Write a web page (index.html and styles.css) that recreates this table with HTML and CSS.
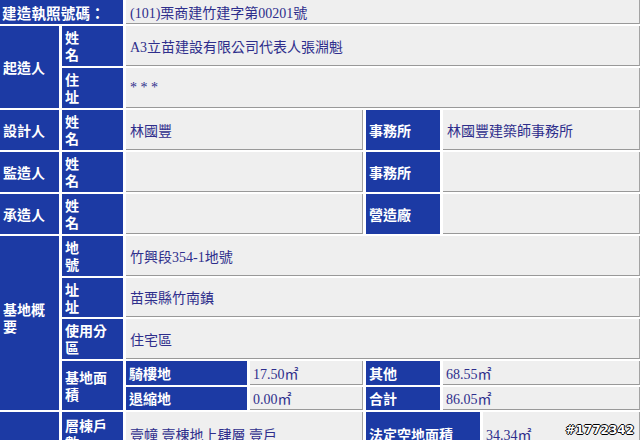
FILE: index.html
```html
<!DOCTYPE html>
<html lang="zh-Hant">
<head>
<meta charset="utf-8">
<title>建造執照</title>
<link rel="stylesheet" href="styles.css">
</head>
<body>
<div class="sheet">
  <div class="lbl hd s2">建造執照號碼：</div>
  <div class="val s5">(101)栗商建竹建字第00201號</div>

  <div class="lbl main rs2">起造人</div>
  <div class="lbl sub">姓<br>名</div>
  <div class="val s5">A3立苗建設有限公司代表人張淵魁</div>
  <div class="lbl sub">住<br>址</div>
  <div class="val s5">* * *</div>

  <div class="lbl main">設計人</div>
  <div class="lbl sub">姓<br>名</div>
  <div class="val s2">林國豐</div>
  <div class="lbl">事務所</div>
  <div class="val s2">林國豐建築師事務所</div>

  <div class="lbl main">監造人</div>
  <div class="lbl sub">姓<br>名</div>
  <div class="val s2"></div>
  <div class="lbl">事務所</div>
  <div class="val s2"></div>

  <div class="lbl main">承造人</div>
  <div class="lbl sub">姓<br>名</div>
  <div class="val s2"></div>
  <div class="lbl">營造廠</div>
  <div class="val s2"></div>

  <div class="lbl main rs5 up">基地概<br>要</div>
  <div class="lbl sub">地<br>號</div>
  <div class="val s5">竹興段354-1地號</div>
  <div class="lbl sub">址<br>址</div>
  <div class="val s5">苗栗縣竹南鎮</div>
  <div class="lbl sub">使用分<br>區</div>
  <div class="val s5">住宅區</div>

  <div class="lbl sub rs2">基地面<br>積</div>
  <div class="lbl">騎樓地</div>
  <div class="val num">17.50㎡</div>
  <div class="lbl">其他</div>
  <div class="val num s2">68.55㎡</div>
  <div class="lbl">退縮地</div>
  <div class="val num">0.00㎡</div>
  <div class="lbl">合計</div>
  <div class="val num s2">86.05㎡</div>

  <div class="lbl main"></div>
  <div class="lbl sub">層棟戶<br>數</div>
  <div class="val s2">壹幢 壹棟地上肆層 壹戶</div>
  <div class="lbl s2">法定空地面積</div>
  <div class="val num">34.34㎡</div>
</div>
<div class="mark">#1772342</div>
</body>
</html>
```

FILE: styles.css
```css
html, body {
  margin: 0;
  padding: 0;
  background: #ffffff;
  overflow: hidden;
}

body {
  width: 640px;
  height: 440px;
  position: relative;
  font-family: "Liberation Serif", "Noto Sans CJK TC", serif;
  font-size: 14px;
}

.sheet {
  display: grid;
  width: 640px;
  grid-template-columns: 59px 61px 121px 113px 74px 37px 1fr;
  grid-template-rows: 24px 40px 40px 40px 40px 40px 40px 39px 40px 24px 23px 44px;
  column-gap: 3px;
  row-gap: 2px;
}

.lbl {
  background: #1c3aa4;
  color: #ffffff;
  font-family: "Noto Sans CJK TC", sans-serif;
  font-weight: bold;
  font-size: 14px;
  line-height: 17px;
  display: flex;
  align-items: center;
  padding: 0 3px;
  box-sizing: border-box;
}

.hd {
  padding-left: 2px;
  font-size: 14.5px;
  letter-spacing: 0.2px;
}

.up {
  padding-bottom: 10px;
}

.val {
  background: #efefef;
  color: #2e2e8c;
  display: flex;
  align-items: center;
  padding: 0 4px;
  box-sizing: border-box;
  border-right: 1px solid #a3a3a3;
  border-bottom: 1px solid #999999;
  font-family: "Liberation Serif", "Noto Sans CJK TC", serif;
  font-size: 14px;
  white-space: nowrap;
}

.num {
  padding-left: 3px;
}

.s2 { grid-column: span 2; }
.s5 { grid-column: span 5; }
.rs2 { grid-row: span 2; }
.rs5 { grid-row: span 5; }

.mark {
  position: absolute;
  right: 6px;
  bottom: 3px;
  font-family: "DejaVu Sans", sans-serif;
  font-weight: bold;
  font-size: 12px;
  color: #ffffff;
  text-shadow: 1px 0 #000, -1px 0 #000, 0 1px #000, 0 -1px #000;
}
```
